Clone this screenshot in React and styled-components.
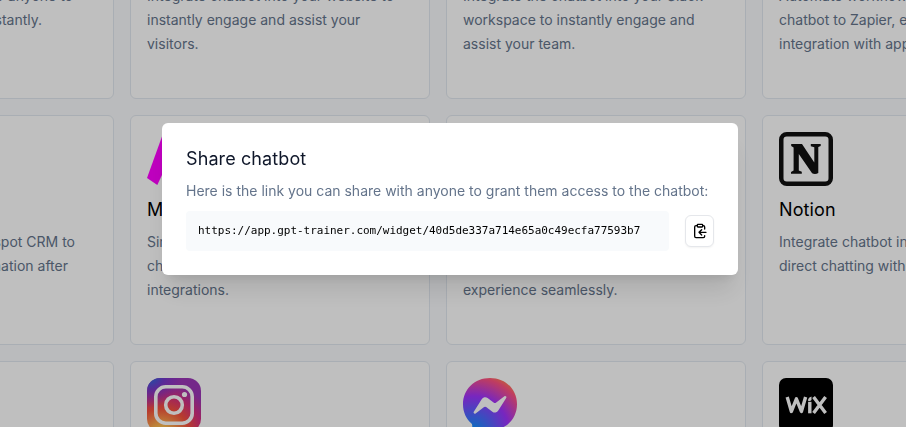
import React from "react";
import styled, { createGlobalStyle } from "styled-components";

const GlobalStyle = createGlobalStyle`
  * { box-sizing: border-box; }
  body {
    margin: 0;
    background: #f8fafc;
    font-family: Inter, sans-serif;
    overflow: hidden;
  }
  h2, h3, p { margin: 0; font-weight: 400; }
`;

const Page = styled.main`
  height: 427px;
  overflow: hidden;
  background: #f8fafc;
`;

const CardGrid = styled.section`
  display: grid;
  grid-template-columns: repeat(4, 300px);
  grid-auto-rows: 230px;
  gap: 16px;
  margin: -131px 0 0 -186px;
`;

const Card = styled.article`
  padding: 16px;
  background: #fff;
  border: 1px solid #e2e8f0;
  border-radius: 6px;
`;

const IconSlot = styled.div`
  height: 54px;
  svg { display: block; }
`;

const CardTitle = styled.h3`
  height: 28px;
  margin-top: 10px;
  font-size: 18px;
  line-height: 28px;
  letter-spacing: 0.1px;
  color: #000;
`;

const CardText = styled.p`
  margin-top: 6px;
  font-size: 14px;
  line-height: 24px;
  color: #64748b;
`;

const Line = styled.span`
  display: block;
  height: 24px;
  white-space: nowrap;
  text-align: ${(p) => (p.$end ? "right" : "left")};
  padding-right: ${(p) => p.$end || 0}px;
`;

const Backdrop = styled.div`
  position: fixed;
  inset: 0;
  display: flex;
  justify-content: center;
  align-items: flex-start;
  padding: 123px 6px 0 0;
  background: rgba(0, 0, 0, 0.25);
`;

const Dialog = styled.div`
  width: 576px;
  height: 152px;
  padding: 24px;
  background: #fff;
  border-radius: 6px;
  box-shadow: 0 20px 25px -5px rgba(0, 0, 0, 0.1), 0 8px 10px -6px rgba(0, 0, 0, 0.1);
`;

const DialogTitle = styled.h2`
  font-size: 18px;
  line-height: 24px;
  letter-spacing: 0.1px;
  color: #0f172a;
`;

const DialogText = styled.p`
  margin-top: 8px;
  font-size: 14px;
  line-height: 24px;
  white-space: nowrap;
  color: #64748b;
`;

const LinkRow = styled.div`
  display: flex;
  align-items: center;
  gap: 16px;
  margin-top: 8px;
`;

const LinkBox = styled.code`
  flex: 1;
  height: 40px;
  padding: 0 12px;
  border-radius: 4px;
  background: #f8fafc;
  color: #000;
  font-family: "DejaVu Sans Mono", monospace;
  font-size: 11px;
  line-height: 40px;
  letter-spacing: -0.022px;
  white-space: nowrap;
`;

const CopyButton = styled.button`
  display: flex;
  align-items: center;
  justify-content: center;
  width: 29px;
  height: 32px;
  padding: 0;
  color: #000;
  background: #fff;
  border: 1px solid #e5e7eb;
  border-radius: 6px;
  box-shadow: 0 1px 2px rgba(0, 0, 0, 0.05);
`;

const ClipboardIcon = () => (
  <svg
    width="16"
    height="16"
    viewBox="0 0 24 24"
    fill="none"
    stroke="currentColor"
    strokeWidth="2"
    strokeLinecap="round"
    strokeLinejoin="round"
  >
    <rect x="8" y="2" width="8" height="4" rx="1" />
    <path d="M8 4H6a2 2 0 0 0-2 2v14a2 2 0 0 0 2 2h11a2 2 0 0 0 2-2v-1M16 4h1a2 2 0 0 1 2 2v3" />
    <path d="M21 14H10.5M14.5 10l-4 4 4 4" />
  </svg>
);

const MakeIcon = () => (
  <svg width="54" height="54" viewBox="0 0 54 54">
    <path d="M15 4.5 0 46l10.3 7L15 43 27 11z" fill="#f0f" />
    <path d="M28 5h10L30 50H18z" fill="#b4f" />
    <path d="M42 5h12v45H42z" fill="#72f" />
  </svg>
);

const NotionIcon = () => (
  <svg width="54" height="54" viewBox="0 0 54 54">
    <rect x="2.25" y="2.25" width="49.5" height="49.5" rx="5.5" fill="none" stroke="#111" strokeWidth="4.5" />
    <path
      d="M12.2 12H23l12.3 18.5V15.3l-3.5-1V12h9.9v2l-2.4 1.1V41c-1.8 1.3-4.6 1.3-6.2.3L19.8 22v16.5l3 1.2v2.1H12v-1.9l2.6-1.3V15.4L12.2 14z"
      fill="#111"
    />
  </svg>
);

const InstagramIcon = () => (
  <svg width="54" height="54" viewBox="0 0 54 54">
    <defs>
      <radialGradient id="igWarm" cx="0.27" cy="1.08" r="1.05">
        <stop offset="0.08" stopColor="#fd5" />
        <stop offset="0.25" stopColor="#fba44b" />
        <stop offset="0.5" stopColor="#f5503d" />
        <stop offset="0.72" stopColor="#d6307d" />
        <stop offset="0.95" stopColor="#9b36b7" />
      </radialGradient>
      <radialGradient id="igCool" cx="0.05" cy="-0.05" r="0.6">
        <stop offset="0.1" stopColor="#2c69dc" />
        <stop offset="0.45" stopColor="#6a39d0" stopOpacity="0.8" />
        <stop offset="1" stopColor="#8030d0" stopOpacity="0" />
      </radialGradient>
    </defs>
    <rect width="54" height="54" rx="13" fill="url(#igWarm)" />
    <rect width="54" height="54" rx="13" fill="url(#igCool)" />
    <rect x="8.8" y="8.8" width="36.4" height="36.4" rx="10" fill="none" stroke="#fff" strokeWidth="3.6" />
    <circle cx="27" cy="27" r="8.3" fill="none" stroke="#fff" strokeWidth="3.6" />
    <circle cx="37.5" cy="16.5" r="2.6" fill="#fff" />
  </svg>
);

const MessengerIcon = () => (
  <svg width="54" height="54" viewBox="0 0 54 54">
    <defs>
      <radialGradient id="msg" cx="0.19" cy="1" r="1.09">
        <stop offset="0" stopColor="#09f" />
        <stop offset="0.61" stopColor="#a033ff" />
        <stop offset="0.93" stopColor="#ff5280" />
        <stop offset="1" stopColor="#ff7061" />
      </radialGradient>
    </defs>
    <path
      d="M27 0C11.8 0 0 11.1 0 26.2c0 7.9 3.2 14.7 8.5 19.4.4.4.7 1 .7 1.6l.2 4.8c.1 1.5 1.6 2.5 3 1.9l5.4-2.4c.5-.2 1-.2 1.4-.1 2.5.7 5.1 1 7.8 1 15.2 0 27-11.1 27-26.2S42.2 0 27 0z"
      fill="url(#msg)"
    />
    <path
      d="m10.8 33.8 7.9-12.6a4 4 0 0 1 5.9-1.1l6.3 4.7c.6.4 1.4.4 2 0l8.5-6.5c1.1-.8 2.6.5 1.8 1.7l-7.9 12.6a4 4 0 0 1-5.9 1.1l-6.3-4.7a1.7 1.7 0 0 0-2 0l-8.5 6.5c-1.1.8-2.6-.5-1.8-1.7z"
      fill="#fff"
    />
  </svg>
);

const WixIcon = () => (
  <svg width="54" height="54" viewBox="0 0 54 54">
    <rect width="54" height="54" rx="7" fill="#000" />
    <g fill="none" stroke="#fff" strokeWidth="3.4" strokeLinejoin="round">
      <path d="M8.2 19 12.4 33.4 17.4 20.8 22.4 33.4 26.6 19" />
      <path d="M30.8 23.8v11.5" />
      <path d="m34.6 19 12 16M46.6 19l-12 16" />
    </g>
    <path d="M29.1 23v-1.4q.2-2 3.4-3v3q0 1.1-1.7 1.4z" fill="#fff" />
  </svg>
);

const cards = [
  { lines: [["Share the link for anyone to", 24], ["access and use it instantly.", 55]] },
  { lines: [["Integrate chatbot into your website to"], ["instantly engage and assist your"], ["visitors."]] },
  { lines: [["Integrate the chatbot into your Slack"], ["workspace to instantly engage and"], ["assist your team."]] },
  { lines: [["Automate workflows by connecting"], ["chatbot to Zapier, enabling seamless"], ["integration with apps."]] },
  { lines: [["Connect to Hubspot CRM to", 22], ["sync user information after", 29]] },
  {
    title: "Make",
    icon: <MakeIcon />,
    lines: [["Simplify workflows by connecting"], ["chatbot to Make for seamless"], ["integrations."]],
  },
  { lines: [["Integrate chatbot with WhatsApp"], ["to enhance your customer"], ["experience seamlessly."]] },
  {
    title: "Notion",
    icon: <NotionIcon />,
    lines: [["Integrate chatbot into Notion for"], ["direct chatting within your pages."]],
  },
  { lines: [] },
  { icon: <InstagramIcon />, lines: [] },
  { icon: <MessengerIcon />, lines: [] },
  { icon: <WixIcon />, lines: [] },
];

export default function App() {
  return (
    <Page>
      <GlobalStyle />
      <CardGrid>
        {cards.map((card, i) => (
          <Card key={i}>
            <IconSlot>{card.icon}</IconSlot>
            <CardTitle>{card.title}</CardTitle>
            <CardText>
              {card.lines.map(([text, end]) => (
                <Line key={text} $end={end}>{text}</Line>
              ))}
            </CardText>
          </Card>
        ))}
      </CardGrid>
      <Backdrop>
        <Dialog role="dialog">
          <DialogTitle>Share chatbot</DialogTitle>
          <DialogText>Here is the link you can share with anyone to grant them access to the chatbot:</DialogText>
          <LinkRow>
            <LinkBox>https://app.gpt-trainer.com/widget/40d5de337a714e65a0c49ecfa77593b7</LinkBox>
            <CopyButton aria-label="Copy link">
              <ClipboardIcon />
            </CopyButton>
          </LinkRow>
        </Dialog>
      </Backdrop>
    </Page>
  );
}
